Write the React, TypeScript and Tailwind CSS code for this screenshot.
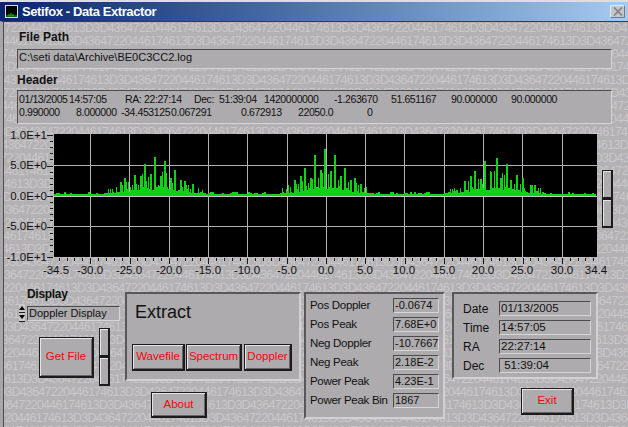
const HEX = "3D4364722044617461 3D".replace(" ", "")

const rng = (() => {
  let s = 12345
  return () => {
    s = (s * 1103515245 + 12345) & 0x7fffffff
    return s / 0x7fffffff
  }
})()

const PEAKS: [number, number][] = [
  [121, 182], [125, 178], [135, 175], [141, 176], [145, 164], [151, 174], [155, 157], [161, 176], [165, 161], [171, 178], [175, 170], [181, 180], [185, 181], [193, 184],
  [295, 180], [301, 176], [305, 168], [311, 178], [315, 155], [321, 170], [325, 149], [331, 171], [335, 155], [341, 176], [345, 168], [351, 180], [355, 178], [361, 184],
  [465, 181], [471, 176], [475, 171], [481, 179], [485, 161], [491, 172], [497, 158], [501, 178], [507, 164], [511, 180], [517, 175], [523, 178], [531, 185], [535, 185],
]

const envelope = (x: number) => [155, 325, 495].reduce((sum, c) => sum + Math.exp(-((x - c) ** 2) / (2 * 22 * 22)), 0)

function basePath() {
  let d = ""
  for (let x = 55; x <= 596; x += 2) {
    const env = envelope(x)
    const h = 1 + (rng() > 0.7 ? rng() * 2 : 0) + (rng() > 0.92 ? 2 : 0) + env * (4 + rng() * 4)
    d += `M${x} 196V${Math.round(195 - h)}`
  }
  return d
}

function spikePath() {
  let d = ""
  for (let x = 100; x <= 545; x += 2) {
    const env = envelope(x)
    if (env > 0.1 && rng() > 0.45) d += `M${x} 196V${Math.round(190 - env * (4 + rng() * 16))}`
  }
  return d
}

const BASE = basePath()
const SPIKES = spikePath()
const TALL = PEAKS.map(([x, y]) => `M${x} 196V${y}`).join("")

const GRID_X = [90, 129, 169, 208, 247, 287, 326, 365, 404, 444, 483, 522, 562]
const GRID_Y = [165, 196, 226]
const X_LABELS: [number, string][] = [
  [56, "-34.5"], [90, "-30.0"], [129, "-25.0"], [169, "-20.0"], [208, "-15.0"], [247, "-10.0"], [287, "-5.0"],
  [326, "0.0"], [365, "5.0"], [404, "10.0"], [444, "15.0"], [483, "20.0"], [522, "25.0"], [562, "30.0"], [596, "34.4"],
]
const Y_LABELS: [number, string][] = [[135, "1.0E+1"], [165, "5.0E+0"], [196, "0.0E+0"], [226, "-5.0E+0"], [257, "-1.0E+1"]]

function Chart() {
  const minorX = Array.from({ length: 69 }, (_, i) => 326 + (i - 34) * 7.86)
  const minorY = Array.from({ length: 21 }, (_, i) => 135 + i * 6.1)
  return (
    <svg width={596} height={152} viewBox="4 128 596 152" className="shrink-0 overflow-visible">
      <rect x={54} y={134} width={543} height={123} fill="#000" />
      <g stroke="#b4b2b4" strokeWidth={1} shapeRendering="crispEdges">
        {GRID_X.map((x) => <line key={x} x1={x} x2={x} y1={134} y2={257} />)}
        {GRID_Y.map((y) => <line key={y} x1={54} x2={597} y1={y} y2={y} />)}
        <line x1={54} x2={597} y1={196} y2={196} stroke="#c8c8c8" />
      </g>
      <g stroke="#10d214" shapeRendering="crispEdges" fill="none">
        <path d={BASE} strokeWidth={2} />
        <path d={SPIKES} strokeWidth={1} />
        <path d={TALL} strokeWidth={2} />
      </g>
      <g stroke="#1a1a1a" strokeWidth={1} shapeRendering="crispEdges">
        {minorX.map((x, i) => <line key={i} x1={Math.round(x)} x2={Math.round(x)} y1={258} y2={i % 5 === 4 ? 264 : 261} />)}
        {minorY.map((y, i) => <line key={i} x1={i % 5 === 0 ? 47 : 50} x2={53} y1={Math.round(y)} y2={Math.round(y)} />)}
      </g>
      <g fontFamily="'Liberation Sans', Arial, sans-serif" fontSize={11.5} fill="#111">
        {Y_LABELS.map(([y, t]) => <text key={t} x={47} y={y + 4} textAnchor="end">{t}</text>)}
        {X_LABELS.map(([x, t]) => <text key={t} x={x} y={274} textAnchor="middle">{t}</text>)}
      </g>
    </svg>
  )
}

function Field({ className, children }: { className?: string; children: React.ReactNode }) {
  return (
    <div className={`border-t border-l border-t-[#4c4c4e] border-l-[#4c4c4e] border-b border-r border-b-[#d6d6d6] border-r-[#d6d6d6] bg-[#adabad] text-[11px] leading-[13px] text-[#111] ${className ?? ""}`}>
      {children}
    </div>
  )
}

function Panel({ className, children }: { className?: string; children: React.ReactNode }) {
  return (
    <div className={`border-2 border-t-[#58585a] border-l-[#58585a] border-b-[#d2d0d2] border-r-[#d2d0d2] bg-[#adabad] ${className ?? ""}`}>
      {children}
    </div>
  )
}

function RedButton({ className, children }: { className?: string; children: React.ReactNode }) {
  return (
    <button className={`flex items-center justify-center border border-[#1c1c1c] border-r-2 border-b-2 bg-[#adabad] text-[11.5px] text-[#f00808] shadow-[inset_1px_1px_0_#e6e6e6,inset_-1px_-1px_0_#666] ${className ?? ""}`}>
      {children}
    </button>
  )
}

function SliderPair({ segment }: { segment: string }) {
  return (
    <div className="flex w-[11px] shrink-0 flex-col">
      {[0, 1].map((i) => (
        <div key={i} className={`${segment} border border-[#1c1c1c] border-r-2 border-b-2 bg-[#adabad] shadow-[inset_1px_1px_0_#e6e6e6]`} />
      ))}
    </div>
  )
}

function Stat({ label, value }: { label: string; value: string }) {
  return (
    <div className="flex h-[19px] items-center">
      <span className="w-[83px] shrink-0 text-[11.5px] tracking-[-0.3px] whitespace-nowrap text-[#111]">{label}</span>
      <Field className="flex h-[15px] w-[46px] items-center pl-[1px]">{value}</Field>
    </div>
  )
}

const HEADER_ROW_1: [number, string][] = [
  [50, "01/13/2005"], [56, "14:57:05"], [19, "RA:"], [50, "22:27:14"], [25, "Dec:"], [45, "51:39:04"], [70, "1420000000"],
  [57, "-1.263670"], [60, "51.651167"], [60, "90.000000"], [60, "90.000000"],
]
const HEADER_ROW_2: [number, string][] = [[57, "0.990000"], [45, "8.000000"], [50, "-34.453125"], [70, "0.067291"], [57, "0.672913"], [69, "22050.0"], [10, "0"]]

function HeaderRow({ cells }: { cells: [number, string][] }) {
  return (
    <div className="flex h-[13px] text-[10.5px] tracking-[-0.4px] whitespace-pre">
      {cells.map(([w, t], i) => (
        <span key={i} className="shrink-0" style={{ width: w }}>{t}</span>
      ))}
    </div>
  )
}

export default function App() {
  const rows = Array.from({ length: 32 }, (_, n) => ((5 - 26 * (n - 28)) % 128 + 128) % 128 - 128)
  return (
    <div className="relative h-[427px] w-[628px] overflow-hidden bg-[#b3b1b3] font-['Liberation_Sans',Arial,sans-serif]">
      {/* Title bar */}
      <div className="flex h-[21px] items-center border-t-2 border-t-[#dedede] bg-gradient-to-r from-[#0a246a] to-[#a6caf0] pr-[3px] pl-[5px]">
        <div className="flex h-[13px] w-[13px] shrink-0 items-end border border-[#d8d8d8] bg-black">
          <svg width={11} height={11} viewBox="0 0 11 11">
            <path d="M0 10H11M3 10V8M5 10V7M7 10V8" stroke="#10d214" strokeWidth={1} />
          </svg>
        </div>
        <span className="ml-[4px] text-[13px] font-bold tracking-[-0.4px] whitespace-nowrap text-white">Setifox - Data Extractor</span>
        <div className="ml-auto flex h-[13px] w-[15px] items-center justify-center border border-[#e8e8e8] border-r-[#7a7a7a] border-b-[#7a7a7a] bg-[#c4c6cc]">
          <svg width={10} height={9} viewBox="0 0 10 9">
            <path d="M1 0.5L9 8.5M9 0.5L1 8.5" stroke="#808080" strokeWidth={1.6} />
          </svg>
        </div>
      </div>

      {/* Client area */}
      <div className="relative h-[406px] border-t border-l-[3px] border-t-[#3c3c3e] border-l-[#a8a6a8]">
        {/* Watermark text */}
        <div className="absolute inset-0 overflow-hidden border-l border-l-[#4c4c4e] text-[12.5px] leading-[13px] tracking-[-0.75px] whitespace-nowrap text-[#c9c7c9] select-none">
          {rows.map((x, n) => (
            <div key={n} className="h-[13px]" style={{ marginLeft: x - 4 }}>
              {HEX.repeat(7)}
            </div>
          ))}
        </div>

        <div className="relative ml-[1px] flex flex-col">
          <div className="mt-[8px] ml-[15px] h-[14px] text-[12px] leading-[14px] font-bold text-[#111]">File Path</div>
          <Field className="mt-[5px] ml-[13px] h-[20px] w-[595px] pt-[1px] pl-[1px]">C:\seti data\Archive\BE0C3CC2.log</Field>

          <div className="mt-[4px] ml-[13px] h-[14px] text-[12px] leading-[14px] font-bold text-[#111]">Header</div>
          <Field className="mt-[3px] ml-[13px] h-[34px] w-[595px] pt-[2px] pl-[1px]">
            <HeaderRow cells={HEADER_ROW_1} />
            <HeaderRow cells={HEADER_ROW_2} />
          </Field>

          {/* Chart with its slider */}
          <div className="mt-[4px] flex">
            <Chart />
            <div className="mt-[42px] ml-[2px]">
              <SliderPair segment="h-[29px]" />
            </div>
          </div>

          {/* Bottom controls */}
          <div className="mt-[7px] flex items-start">
            <div className="w-[121px] shrink-0">
              <div className="ml-[23px] h-[14px] text-[12px] leading-[14px] font-bold tracking-[-0.3px] text-[#111]">Display</div>
              <div className="mt-[3px] ml-[15px] flex items-center gap-[2px]">
                <div className="flex h-[18px] w-[6px] flex-col">
                  {["M0 4L3 0L6 4Z", "M0 0L6 0L3 4Z"].map((d) => (
                    <div key={d} className="flex h-[9px] w-[6px] items-center justify-center border-b border-[#222] bg-[#c8c8c8]">
                      <svg width={6} height={4} viewBox="0 0 6 4"><path d={d} fill="#000" /></svg>
                    </div>
                  ))}
                </div>
                <Field className="flex h-[15px] w-[93px] items-center pl-[1px]">Doppler Display</Field>
              </div>
              <div className="mt-[6px] ml-[35px] flex items-center gap-[5px]">
                <RedButton className="h-[41px] w-[55px]">Get File</RedButton>
                <SliderPair segment="h-[29px]" />
              </div>
            </div>

            <div className="mt-[5px] flex w-[179px] shrink-0 flex-col">
              <Panel className="h-[89px] w-[176px]">
                <div className="mt-[6px] ml-[8px] h-[24px] text-[18px] leading-[24px] text-[#111]">Extract</div>
                <div className="mt-[20px] ml-[5px] flex">
                  <RedButton className="h-[27px] w-[53px]">Wavefile</RedButton>
                  <RedButton className="ml-[1px] h-[27px] w-[56px]">Spectrum</RedButton>
                  <RedButton className="ml-[2px] h-[27px] w-[48px]">Doppler</RedButton>
                </div>
              </Panel>
              <RedButton className="mt-[11px] ml-[26px] h-[26px] w-[56px]">About</RedButton>
            </div>

            <Panel className="mt-[5px] h-[127px] w-[141px] shrink-0 pt-[2px] pl-[4px]">
              <Stat label="Pos Doppler" value="-0.0674" />
              <Stat label="Pos Peak" value="7.68E+0" />
              <Stat label="Neg Doppler" value="-10.7667" />
              <Stat label="Neg Peak" value="2.18E-2" />
              <Stat label="Power Peak" value="4.23E-1" />
              <Stat label="Power Peak Bin" value="1867" />
            </Panel>

            <div className="mt-[5px] ml-[7px] flex w-[146px] shrink-0 flex-col">
              <Panel className="h-[87px] pt-[5px] pl-[9px]">
                {[["Date", "01/13/2005"], ["Time", "14:57:05"], ["RA", "22:27:14"], ["Dec", " 51:39:04"]].map(([k, v]) => (
                  <div key={k} className="flex h-[19px] items-center">
                    <span className="w-[36px] shrink-0 text-[12px] text-[#111]">{k}</span>
                    <Field className="flex h-[15px] w-[92px] items-center pl-[1px] whitespace-pre">
                      <span className="text-[11.5px]">{v}</span>
                    </Field>
                  </div>
                ))}
              </Panel>
              <RedButton className="mt-[9px] ml-[69px] h-[27px] w-[53px]">Exit</RedButton>
            </div>
          </div>
        </div>
      </div>
    </div>
  )
}
